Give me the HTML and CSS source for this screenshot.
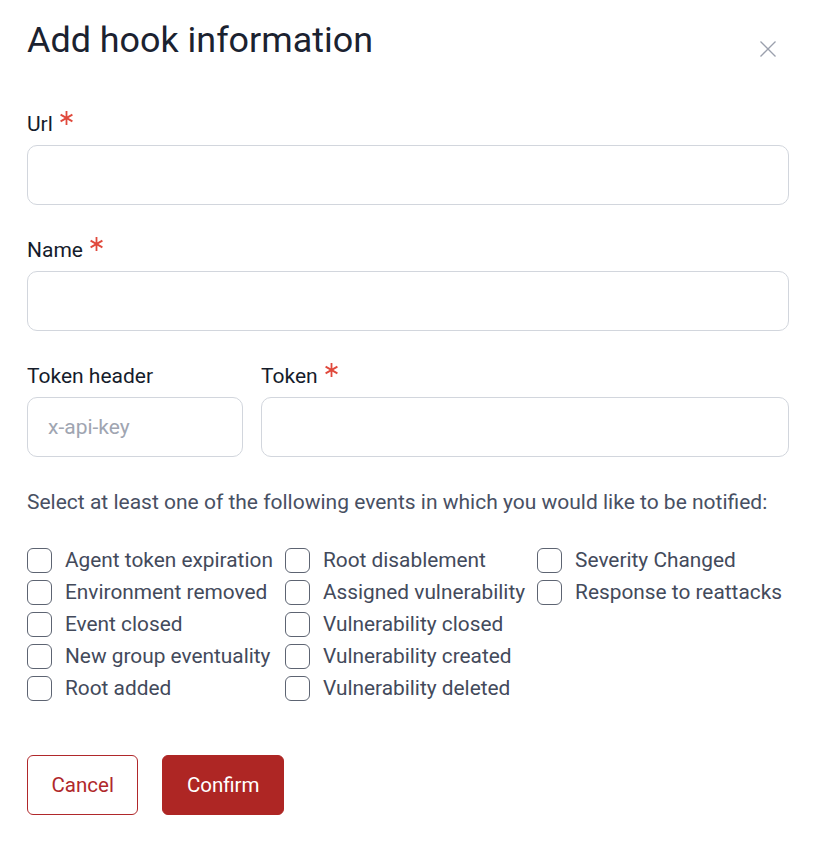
FILE: index.html
```html
<!DOCTYPE html>
<html lang="en">
<head>
<meta charset="utf-8">
<title>Add hook information</title>
<link rel="stylesheet" href="styles.css">
</head>
<body>
<div class="dialog">
  <div class="header">
    <h1 class="title">Add hook information</h1>
    <button class="close" aria-label="Close">
      <svg width="16" height="16" viewBox="0 0 16 16"><path d="M0.5 0.5 L15.5 15.5 M15.5 0.5 L0.5 15.5" stroke="#9ba0ad" stroke-width="1.3" fill="none"/></svg>
    </button>
  </div>
  <form class="form">
    <div class="field">
      <label class="label">Url<svg class="req" width="13" height="14" viewBox="0 0 13 14"><path d="M6.5 0 V14 M0.6 3.6 L12.4 10.4 M0.6 10.4 L12.4 3.6" stroke="#e0493c" stroke-width="1.8" fill="none"/></svg></label>
      <input class="input" type="text">
    </div>
    <div class="field">
      <label class="label">Name<svg class="req" width="13" height="14" viewBox="0 0 13 14"><path d="M6.5 0 V14 M0.6 3.6 L12.4 10.4 M0.6 10.4 L12.4 3.6" stroke="#e0493c" stroke-width="1.8" fill="none"/></svg></label>
      <input class="input" type="text">
    </div>
    <div class="row">
      <div class="field small">
        <label class="label">Token header</label>
        <input class="input" type="text" placeholder="x-api-key">
      </div>
      <div class="field grow">
        <label class="label">Token<svg class="req" width="13" height="14" viewBox="0 0 13 14"><path d="M6.5 0 V14 M0.6 3.6 L12.4 10.4 M0.6 10.4 L12.4 3.6" stroke="#e0493c" stroke-width="1.8" fill="none"/></svg></label>
        <input class="input" type="text">
      </div>
    </div>
    <p class="hint">Select at least one of the following events in which you would like to be notified:</p>
    <div class="events">
      <label class="event"><span class="box"></span>Agent token expiration</label>
      <label class="event"><span class="box"></span>Environment removed</label>
      <label class="event"><span class="box"></span>Event closed</label>
      <label class="event"><span class="box"></span>New group eventuality</label>
      <label class="event"><span class="box"></span>Root added</label>
      <label class="event"><span class="box"></span>Root disablement</label>
      <label class="event"><span class="box"></span>Assigned vulnerability</label>
      <label class="event"><span class="box"></span>Vulnerability closed</label>
      <label class="event"><span class="box"></span>Vulnerability created</label>
      <label class="event"><span class="box"></span>Vulnerability deleted</label>
      <label class="event"><span class="box"></span>Severity Changed</label>
      <label class="event"><span class="box"></span>Response to reattacks</label>
    </div>
    <div class="actions">
      <button type="button" class="btn btn-outline">Cancel</button>
      <button type="button" class="btn btn-primary">Confirm</button>
    </div>
  </form>
</div>
</body>
</html>
```

FILE: styles.css
```css
* { box-sizing: border-box; }
html, body { margin: 0; padding: 0; background: #fff; }
body { font-family: Roboto, "Liberation Sans", sans-serif; }

.dialog {
  padding: 18px 25px 0 27px;
}

.header {
  display: flex;
  justify-content: space-between;
  align-items: flex-start;
}

.title {
  margin: 0;
  font-size: 35.9px;
  line-height: 44px;
  font-weight: 400;
  color: #1b2230;
}

.close {
  margin: 23px 13px 0 0;
  padding: 0;
  border: 0;
  background: none;
  width: 16px;
  height: 16px;
  display: flex;
}

.form {
  margin-top: 48px;
  display: flex;
  flex-direction: column;
}

.field {
  display: flex;
  flex-direction: column;
  margin-bottom: 31px;
}

.label {
  display: flex;
  align-items: flex-start;
  font-size: 21px;
  line-height: 28px;
  color: #151c2b;
  margin-bottom: 7px;
}

.req {
  margin-left: 7px;
  margin-top: 1px;
}

.input {
  height: 60px;
  border: 1px solid #d2d6dd;
  border-radius: 10px;
  padding: 0 20px;
  font-family: inherit;
  font-size: 21px;
  color: #151c2b;
  outline: none;
}

.input::placeholder { color: #a0a5b1; }

.row {
  display: flex;
  gap: 18px;
}

.small { width: 216px; }
.grow { flex: 1; }

.hint {
  margin: 0;
  font-size: 21px;
  line-height: 28px;
  color: #485063;
}

.events {
  margin-top: 32px;
  display: grid;
  grid-template-rows: repeat(5, 25px);
  grid-auto-flow: column;
  grid-auto-columns: max-content;
  column-gap: 12px;
  row-gap: 7px;
}

.event {
  display: flex;
  align-items: center;
  gap: 13px;
  font-size: 20.85px;
  line-height: 25px;
  color: #434a5b;
}

.box {
  width: 25px;
  height: 25px;
  border: 1px solid #5d6472;
  border-radius: 6px;
  flex: none;
}

.actions {
  margin-top: 54px;
  display: flex;
  gap: 24px;
}

.btn {
  height: 60px;
  padding: 0 23.5px;
  border-radius: 6px;
  font-family: inherit;
  font-size: 20.5px;
  cursor: pointer;
}

.btn-outline {
  background: #fff;
  border: 1px solid #b0282b;
  color: #b0282b;
}

.btn-primary {
  background: #ae2624;
  border: 1px solid #ae2624;
  color: #fff;
}
```
